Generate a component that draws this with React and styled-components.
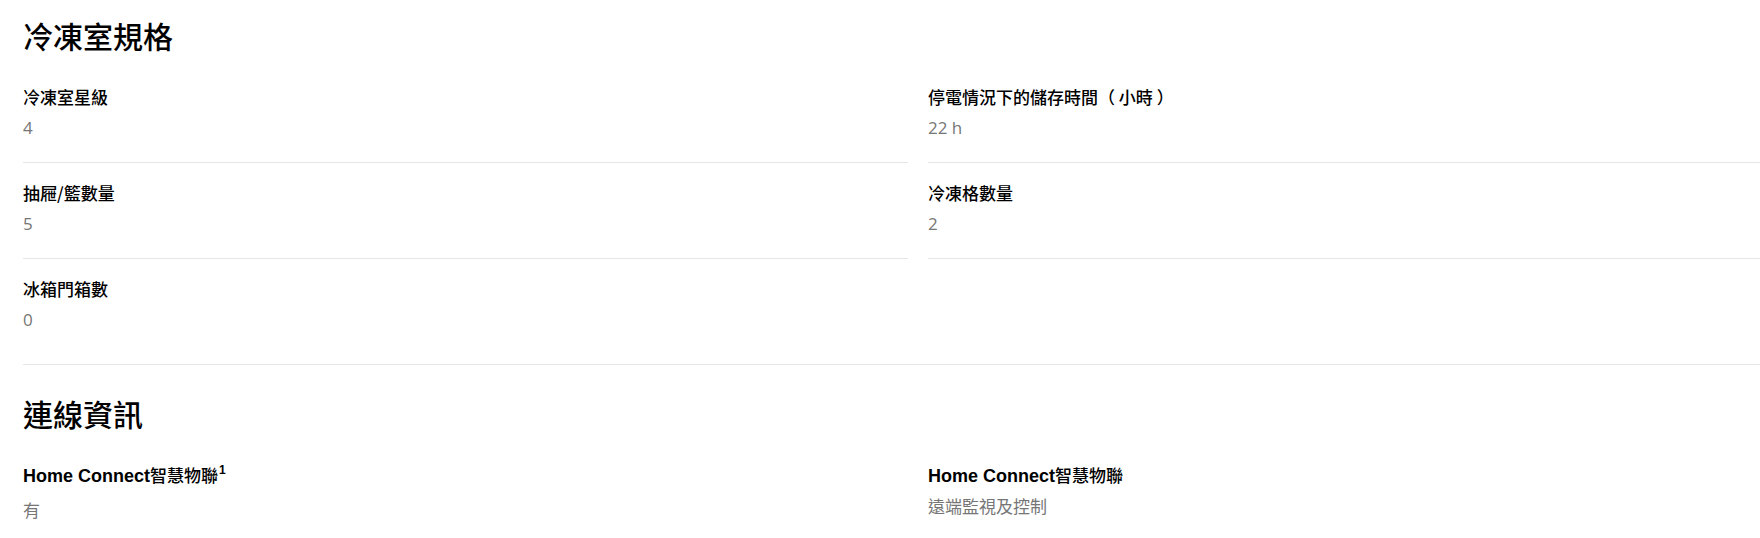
import React from "react";
import styled, { createGlobalStyle } from "styled-components";

const GlobalStyle = createGlobalStyle`
  html, body {
    margin: 0;
    padding: 0;
    background: #ffffff;
    overflow: hidden;
  }
  body {
    font-family: "Open Sans", "Noto Sans CJK TC", sans-serif;
    color: #000000;
  }
`;

const Page = styled.main`
  width: 1813px;
  padding-left: 23px;
  box-sizing: border-box;
`;

const Section = styled.section`
  padding: 29px 0 10px;
  border-bottom: 1px solid #e6e6e6;

  &:first-child {
    padding-top: 16px;
  }
  &:last-child {
    border-bottom: none;
  }
`;

const Heading = styled.h2`
  margin: 0 0 12px;
  font-family: "Noto Sans CJK TC", sans-serif;
  font-size: 30px;
  line-height: 39px;
  font-weight: 500;
  color: #000000;
`;

const Grid = styled.dl`
  margin: 0;
  display: grid;
  grid-template-columns: 885px 885px;
  column-gap: 20px;
`;

const Item = styled.div`
  padding: 18px 0 22px;
  border-bottom: ${(p) => (p.$last ? "none" : "1px solid #e6e6e6")};
`;

const Label = styled.dt`
  margin: 0;
  font-family: "Noto Sans CJK TC", sans-serif;
  font-size: 17px;
  line-height: 24px;
  font-weight: 500;
  color: #000000;
  white-space: pre;
`;

const Brand = styled.span`
  font-family: "Liberation Sans", "Noto Sans CJK TC", sans-serif;
  font-weight: 700;
  font-size: 18px;
`;

const Sup = styled.sup`
  font-family: "Liberation Sans", sans-serif;
  font-weight: 700;
  font-size: 12px;
  line-height: 0;
  vertical-align: 8px;
  margin-left: 1px;
`;

const Value = styled.dd`
  margin: ${(p) => (p.$low ? "11px" : "7px")} 0 0;
  font-family: "Open Sans", "Noto Sans CJK TC", sans-serif;
  font-size: 17px;
  line-height: 24px;
  font-weight: 400;
  color: #767676;
`;

const sections = [
  {
    title: "冷凍室規格",
    items: [
      { label: "冷凍室星級", value: "4" },
      { label: "停電情況下的儲存時間（ 小時 ）", value: "22 h" },
      { label: "抽屜/籃數量", value: "5" },
      { label: "冷凍格數量", value: "2" },
      { label: "冰箱門箱數", value: "0" },
    ],
  },
  {
    title: "連線資訊",
    items: [
      { brand: true, label: "智慧物聯", sup: "1", value: "有" },
      { brand: true, label: "智慧物聯", value: "遠端監視及控制" },
    ],
  },
];

export default function App() {
  return (
    <>
      <GlobalStyle />
      <Page>
        {sections.map((s) => {
          const lastRowStart = s.items.length - (s.items.length % 2 === 0 ? 2 : 1);
          return (
            <Section key={s.title}>
              <Heading>{s.title}</Heading>
              <Grid>
                {s.items.map((it, i) => (
                  <Item key={i} $last={i >= lastRowStart}>
                    <Label>
                      {it.brand && <Brand>Home Connect</Brand>}
                      {it.label}
                      {it.sup && <Sup>{it.sup}</Sup>}
                    </Label>
                    <Value $low={Boolean(it.sup)}>{it.value}</Value>
                  </Item>
                ))}
              </Grid>
            </Section>
          );
        })}
      </Page>
    </>
  );
}
